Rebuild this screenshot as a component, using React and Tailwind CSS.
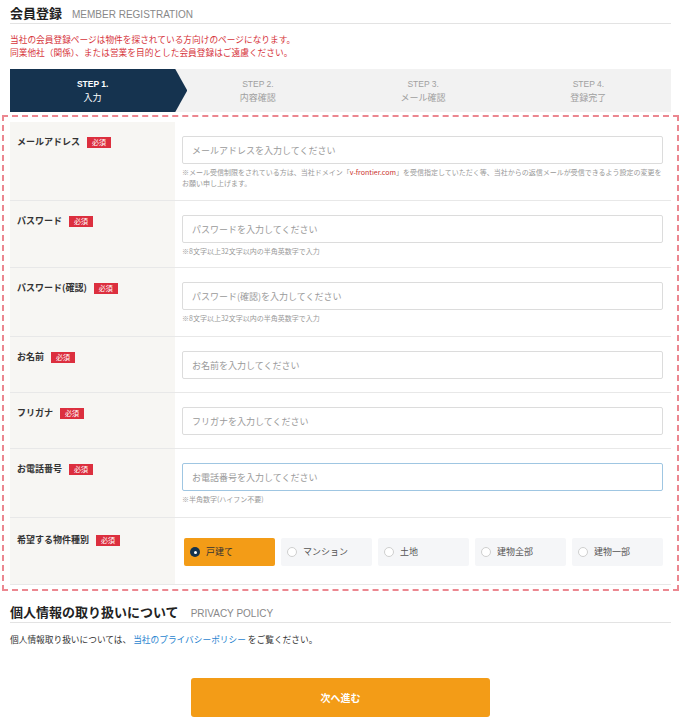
const FONT = "font-['Noto_Sans_CJK_JP','Noto_Sans',sans-serif]"

const STEPS = [
  { no: 'STEP 1.', label: '入力' },
  { no: 'STEP 2.', label: '内容確認' },
  { no: 'STEP 3.', label: 'メール確認' },
  { no: 'STEP 4.', label: '登録完了' },
]

const FIELDS = [
  {
    label: 'メールアドレス',
    placeholder: 'メールアドレスを入力してください',
    pb: 'pb-[11px]',
    hint: (
      <>
        ※メール受信制限をされている方は、当社ドメイン「<span className="text-[#c9302c]">v-frontier.com</span>」を受信指定していただく等、当社からの返信メールが受信できるよう設定の変更をお願い申し上げます。
      </>
    ),
  },
  { label: 'パスワード', placeholder: 'パスワードを入力してください', hint: '※8文字以上32文字以内の半角英数字で入力', pb: 'pb-[10px]' },
  { label: 'パスワード(確認)', placeholder: 'パスワード(確認)を入力してください', hint: '※8文字以上32文字以内の半角英数字で入力', pb: 'pb-[12px]' },
  { label: 'お名前', placeholder: 'お名前を入力してください' },
  { label: 'フリガナ', placeholder: 'フリガナを入力してください' },
  { label: 'お電話番号', placeholder: 'お電話番号を入力してください', hint: '※半角数字(ハイフン不要)', focus: true, pb: 'pb-[12px]' },
]

const TYPES = ['戸建て', 'マンション', '土地', '建物全部', '建物一部']

function Label({ text, top = 'pt-[14px]' }) {
  return (
    <div className={`w-[165px] shrink-0 bg-[#f7f6f3] px-[7px] ${top}`}>
      <div className="flex items-center gap-[7px]">
        <span className="text-[9px] leading-[12px] font-bold text-[#333]">{text}</span>
        <span className="bg-[#dc2f3e] px-[5px] text-[7px] leading-[11px] text-white">必須</span>
      </div>
    </div>
  )
}

export default function App() {
  return (
    <div className={`w-[681px] min-h-[725px] bg-white px-[10px] text-[#333] ${FONT}`}>
      {/* Title */}
      <div className="flex items-baseline gap-[10px] border-b border-[#e3e3e3] pt-[5px]">
        <h1 className="text-[13px] leading-[16px] font-bold text-[#222]">会員登録</h1>
        <span className="font-['Liberation_Sans',sans-serif] text-[10px] leading-[16px] text-[#888]">MEMBER REGISTRATION</span>
      </div>

      <div className="mt-[9px] text-[8.7px] leading-[13px] text-[#d6343b]">
        <p>当社の会員登録ページは物件を探されている方向けのページになります。</p>
        <p>同業他社（関係）、または営業を目的とした会員登録はご遠慮ください。</p>
      </div>

      {/* Steps */}
      <div className="mt-[10px] grid h-[43px] grid-cols-4 bg-[#f2f2f2]">
        {STEPS.map((s, i) => (
          <div
            key={s.no}
            className={
              i === 0
                ? 'flex w-[calc(100%+12px)] flex-col items-center justify-center bg-[#15334f] pr-[12px] text-white [clip-path:polygon(0_0,calc(100%_-_12px)_0,100%_50%,calc(100%_-_12px)_100%,0_100%)]'
                : 'flex flex-col items-center justify-center text-[#a0a0a0]'
            }
          >
            <span className={`font-['Liberation_Sans',sans-serif] text-[8.5px] leading-[14px] ${i === 0 ? 'font-bold' : ''}`}>{s.no}</span>
            <span className="text-[9px] leading-[14px]">{s.label}</span>
          </div>
        ))}
      </div>

      {/* Form */}
      <div className="-mx-[8px] mt-[3px] border-2 border-dashed border-[#ec8790] px-[6px] pt-[5px] pb-[4px]">
        {FIELDS.map(f => (
          <div key={f.label} className="flex border-b border-[#e8e8e8]">
            <Label text={f.label} />
            <div className={`flex-1 pl-[7px] pr-[8px] pt-[14px] ${f.pb || (f.hint ? 'pb-[11px]' : 'pb-[13px]')}`}>
              <input
                readOnly
                placeholder={f.placeholder}
                className={`block h-[28px] w-full rounded-[2px] border bg-white px-[9px] text-[9px] outline-none placeholder:text-[#9a9a9a] ${f.focus ? 'border-[#9fc6e2]' : 'border-[#dcdcdc]'}`}
              />
              {f.hint && <p className="mt-[3px] text-[7px] leading-[11px] text-[#999]">{f.hint}</p>}
            </div>
          </div>
        ))}

        <div className="flex border-b border-[#e8e8e8]">
          <Label text="希望する物件種別" top="pt-[16px]" />
          <div className="flex flex-1 gap-[6px] pl-[9px] pr-[8px] pt-[20px] pb-[18px]">
            {TYPES.map((t, i) => (
              <div
                key={t}
                className={`flex h-[28px] w-[91px] items-center gap-[6px] rounded-[2px] px-[6px] text-[9px] ${i === 0 ? 'bg-[#f39c17] text-[#333]' : 'bg-[#f5f6f8] text-[#555]'}`}
              >
                {i === 0 ? (
                  <span className="flex h-[10px] w-[10px] items-center justify-center rounded-full bg-[#15334f]">
                    <span className="h-[3px] w-[3px] rounded-full bg-white" />
                  </span>
                ) : (
                  <span className="h-[10px] w-[10px] rounded-full border border-[#cfcfcf] bg-white" />
                )}
                {t}
              </div>
            ))}
          </div>
        </div>
      </div>

      {/* Privacy */}
      <div className="mt-[13px] flex items-baseline gap-[12px] border-b border-[#e3e3e3]">
        <h2 className="text-[13px] leading-[16px] font-bold text-[#222]">個人情報の取り扱いについて</h2>
        <span className="font-['Liberation_Sans',sans-serif] text-[10px] leading-[16px] text-[#888]">PRIVACY POLICY</span>
      </div>
      <p className="mt-[10px] text-[8.7px] leading-[13px] text-[#333]">
        個人情報取り扱いについては、 <a className="text-[#2a85d0]">当社のプライバシーポリシー</a> をご覧ください。
      </p>

      <div className="mt-[32px] flex justify-center">
        <button className="h-[39px] w-[299px] rounded-[3px] bg-[#f39c17] text-[10px] font-bold text-white">次へ進む</button>
      </div>
    </div>
  )
}
